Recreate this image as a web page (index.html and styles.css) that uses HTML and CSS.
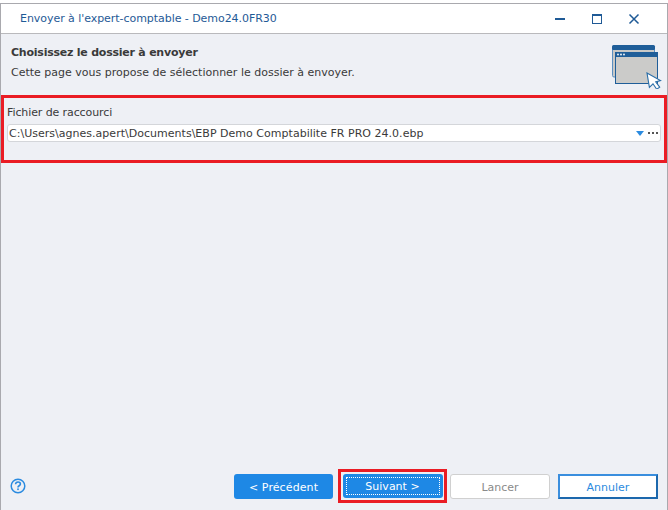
FILE: index.html
```html
<!DOCTYPE html>
<html lang="fr">
<head>
<meta charset="utf-8">
<title>Envoyer à l'expert-comptable</title>
<link rel="stylesheet" href="styles.css">
</head>
<body>
<div class="window">
  <header class="titlebar">
    <span class="title">Envoyer à l'expert-comptable - Demo24.0FR30</span>
    <div class="controls">
      <svg class="ctl" width="12" height="12" viewBox="0 0 12 12"><rect x="1" y="5" width="10" height="2" fill="#1f5a96"/></svg>
      <svg class="ctl" width="12" height="12" viewBox="0 0 12 12"><rect x="1.5" y="1.5" width="9" height="9" fill="none" stroke="#1f5a96"/><rect x="1" y="1" width="10" height="2" fill="#1f5a96"/></svg>
      <svg class="ctl" width="12" height="12" viewBox="0 0 12 12"><path d="M1.5 1.5l9 9M10.5 1.5l-9 9" stroke="#1f5a96" stroke-width="1.5" fill="none"/></svg>
    </div>
  </header>
  <main class="content">
    <section class="intro">
      <div class="intro-text">
        <h1 class="heading">Choisissez le dossier à envoyer</h1>
        <p class="sub">Cette page vous propose de sélectionner le dossier à envoyer.</p>
      </div>
      <svg class="wizard-icon" width="50" height="44" viewBox="0 0 50 44">
        <rect x="0.5" y="1" width="42" height="31" rx="1.5" fill="#c9c9c7" stroke="#5b8fc0"/>
        <rect x="0" y="0" width="43" height="5" rx="1.5" fill="#1f5e99"/>
        <rect x="3.5" y="7.5" width="42" height="31" fill="#cbcbc9" stroke="#1f5e99"/>
        <rect x="3" y="7" width="43" height="5" rx="1" fill="#1f5e99"/>
        <circle cx="6" cy="9.5" r="0.9" fill="#fff"/><circle cx="9" cy="9.5" r="0.9" fill="#fff"/><circle cx="12" cy="9.5" r="0.9" fill="#fff"/>
        <path d="M35 28l13.5 7.5-4.8 1.4 4 5.2-3 2.1-3.7-5.4-3.6 3.5z" fill="#fff" stroke="#2a6ea8" stroke-width="1.1"/>
      </svg>
    </section>
    <section class="field">
      <label class="field-label">Fichier de raccourci</label>
      <div class="input">
        <span class="input-value">C:\Users\agnes.apert\Documents\EBP Demo Comptabilite FR PRO 24.0.ebp</span>
        <svg class="caret" width="8" height="5" viewBox="0 0 8 5"><path d="M0 0h8L4 5z" fill="#2b8be0"/></svg>
        <span class="dots"><i></i><i></i><i></i></span>
      </div>
    </section>
    <div class="spacer"></div>
    <footer class="footer">
      <svg class="help" width="16" height="16" viewBox="0 0 16 16">
        <circle cx="8" cy="8" r="6.8" fill="none" stroke="#2b8be0" stroke-width="1.5"/>
        <path d="M5.6 6.2c0-1.4 1-2.2 2.4-2.2s2.4.8 2.4 2c0 1.8-2.4 1.7-2.4 3.4" fill="none" stroke="#2b8be0" stroke-width="1.6"/>
        <rect x="7.2" y="10.4" width="1.6" height="1.7" fill="#2b8be0"/>
      </svg>
      <div class="buttons">
        <button class="btn primary prev">&lt; Précédent</button>
        <div class="focus-wrap"><button class="btn primary next"><span class="focus-ring">Suivant &gt;</span></button></div>
        <button class="btn disabled">Lancer</button>
        <button class="btn cancel">Annuler</button>
      </div>
    </footer>
  </main>
</div>
</body>
</html>
```
FILE: styles.css
```css
* { box-sizing: border-box; }
html, body { margin: 0; padding: 0; background: #fff; }
body { width: 668px; height: 510px; padding-top: 3px; font-family: "DejaVu Sans", sans-serif; font-size: 11px; color: #3a3a3a; overflow: hidden; }
.window { width: 668px; height: 511px; border: 1px solid #a9a9ae; display: flex; flex-direction: column; background: #eef0f5; }
.titlebar { height: 30px; flex: none; background: #fff; border-bottom: 1px solid #b9b9bc; display: flex; align-items: center; justify-content: space-between; padding-left: 19px; padding-right: 27px; }
.title { color: #1f5a96; letter-spacing: -0.05px; }
.controls { display: flex; gap: 25px; }
.ctl { display: block; }
.content { flex: 1; display: flex; flex-direction: column; min-height: 0; }
.intro { height: 62px; flex: none; display: flex; justify-content: space-between; padding: 9px 5px 0 10px; }
.heading { margin: 0; font-size: 11px; font-weight: 700; color: #3a3a3a; line-height: 20px; letter-spacing: -0.23px; }
.sub { margin: 0; line-height: 20px; }
.wizard-icon { margin-top: 2px; }
.field { height: 68px; flex: none; border: 3px solid #ea1c24; padding: 7px 3px 0 3px; margin-top: -1px; }
.field-label { display: block; line-height: 16px; margin-bottom: 3px; letter-spacing: -0.1px; }
.input { height: 18px; background: #fff; border: 1px solid #d4d6da; border-radius: 3px; display: flex; align-items: center; padding: 0 2px 0 1px; }
.input-value { flex: 1; white-space: nowrap; letter-spacing: 0.02px; }
.caret { margin-right: 4px; }
.dots { display: flex; gap: 2px; }
.dots i { width: 2px; height: 2px; background: #555; display: block; }
.spacer { flex: 1; }
.footer { height: 39px; flex: none; display: flex; align-items: flex-start; justify-content: space-between; padding: 0 9px; }
.help { margin-top: 4px; }
.buttons { display: flex; align-items: flex-start; }
.btn { font: inherit; width: 100px; height: 25px; padding: 1px 0 0; border-radius: 3px; border: 1px solid transparent; }
.primary { background: #1e88e5; color: #fff; }
.prev { width: 99px; margin-right: 5px; letter-spacing: 0.1px; }
.focus-wrap { border: 3px solid #ea1c24; margin-top: -5px; padding: 2px 0; margin-right: 3px; width: 109px; height: 34px; display: flex; justify-content: center; }
.next { padding: 2px; height: 24px; }
.focus-ring { display: block; height: 100%; border: 1px dotted #fff; line-height: 18px; }
.disabled { background: #fff; border-color: #d0d0d0; color: #8a8a8a; margin-right: 8px; }
.cancel { background: #fff; border: 2px solid #1c68ad; border-top-color: #3a8ede; border-left-color: #3a8ede; border-radius: 0; color: #2b8be0; }
```
